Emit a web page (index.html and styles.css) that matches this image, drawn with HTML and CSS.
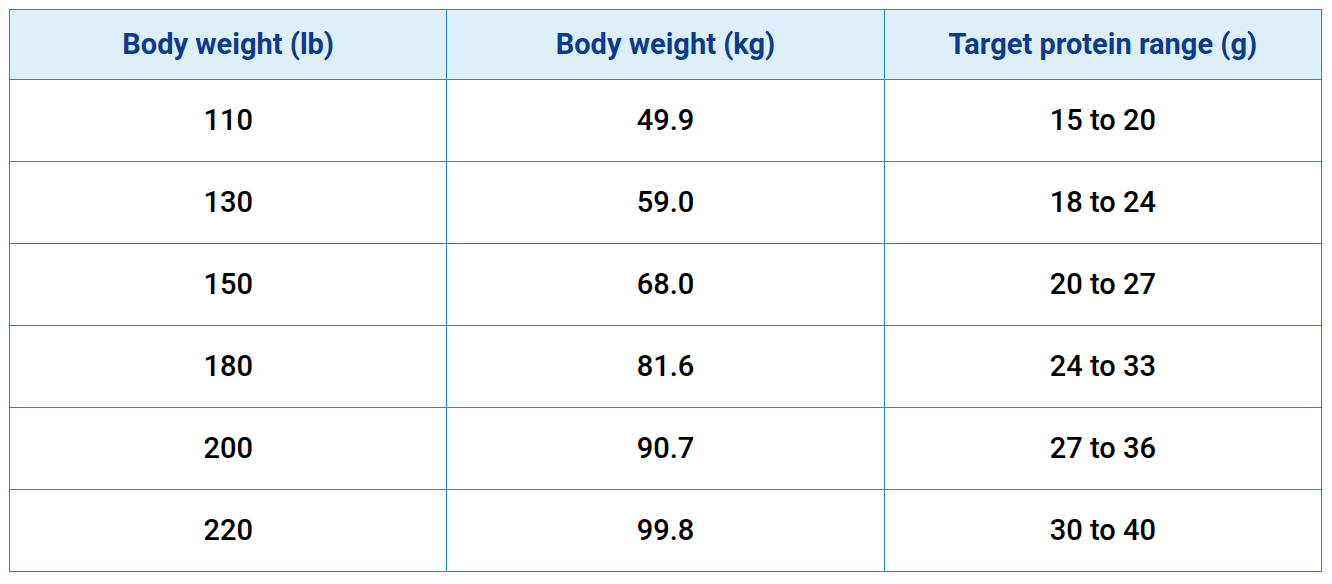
FILE: index.html
```html
<!DOCTYPE html>
<html>
<head>
<meta charset="utf-8">
<link rel="stylesheet" href="styles.css">
</head>
<body>
<table class="protein">
  <thead>
    <tr><th>Body weight (lb)</th><th>Body weight (kg)</th><th>Target protein range (g)</th></tr>
  </thead>
  <tbody>
    <tr><td>110</td><td>49.9</td><td>15 to 20</td></tr>
    <tr><td>130</td><td>59.0</td><td>18 to 24</td></tr>
    <tr><td>150</td><td>68.0</td><td>20 to 27</td></tr>
    <tr><td>180</td><td>81.6</td><td>24 to 33</td></tr>
    <tr><td>200</td><td>90.7</td><td>27 to 36</td></tr>
    <tr><td>220</td><td>99.8</td><td>30 to 40</td></tr>
  </tbody>
</table>
</body>
</html>
```
FILE: styles.css
```css
html, body { margin: 0; padding: 0; background: #fff; }
body { padding: 9px; }
.protein {
  border-collapse: collapse;
  width: 1313px;
  table-layout: fixed;
  font-family: Roboto, "Liberation Sans", sans-serif;
  font-size: 29px;
}
.protein th, .protein td {
  border: 1px solid #1e88d2;
  text-align: center;
  padding: 0 0 2px 0;
}
.protein th {
  background: #ddf0fa;
  color: #0d3a8a;
  font-weight: 700;
  height: 67px;
}
.protein td {
  color: #000;
  font-weight: 500;
  height: 79px;
}
```
